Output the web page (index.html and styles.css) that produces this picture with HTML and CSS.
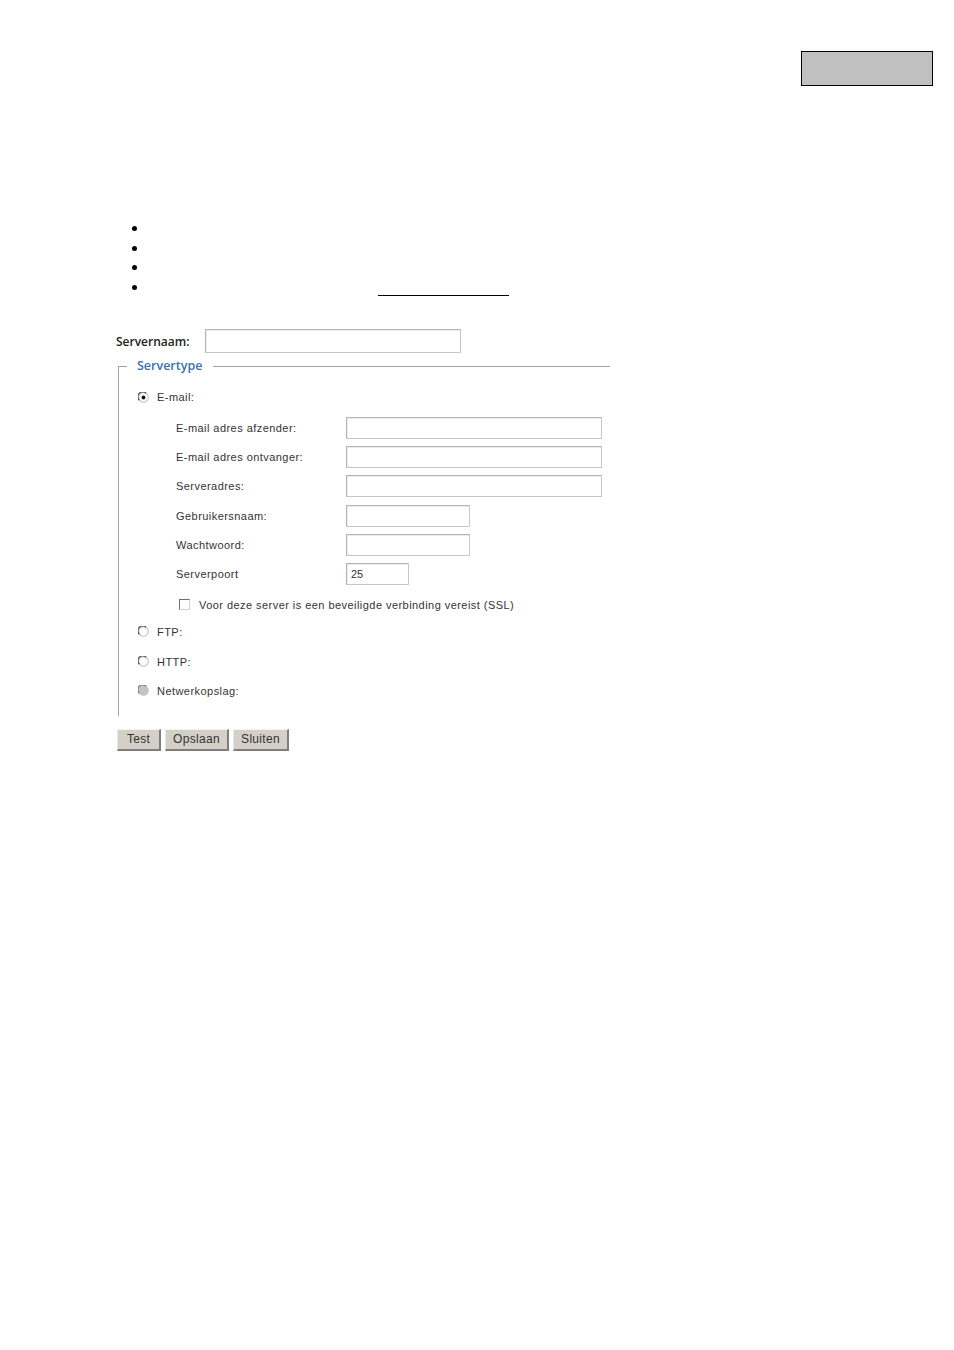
FILE: index.html
```html
<!DOCTYPE html>
<html>
<head>
<meta charset="utf-8">
<link rel="stylesheet" href="styles.css">
</head>
<body>
<div class="topbar"><div class="graybox"></div></div>

<ul class="bullets">
  <li></li>
  <li></li>
  <li></li>
  <li><span class="link-line"></span></li>
</ul>

<div class="form">
  <div class="name-row">
    <label class="name-label">Servernaam:</label>
    <div class="input input-name"></div>
  </div>

  <div class="fieldset">
    <div class="fs-head">
      <div class="fs-corner"></div>
      <div class="fs-legend">Servertype</div>
      <div class="fs-line"></div>
    </div>
    <div class="fs-body">
      <div class="radio-row">
        <svg class="radio" width="11" height="11" viewBox="0 0 11 11"><circle cx="5.5" cy="5.5" r="4.8" fill="#fff" stroke="#c4c4c4" stroke-width="1.1"/><path d="M1.3 8.2 A4.8 4.8 0 0 1 8.2 1.3" fill="none" stroke="#555" stroke-width="1.3"/><circle cx="5.5" cy="5.5" r="1.9" fill="#111"/></svg>
        <span class="txt">E-mail:</span>
      </div>

      <div class="email-grid">
        <span class="txt">E-mail adres afzender:</span><div class="input input-long"></div>
        <span class="txt">E-mail adres ontvanger:</span><div class="input input-long"></div>
        <span class="txt">Serveradres:</span><div class="input input-long"></div>
        <span class="txt">Gebruikersnaam:</span><div class="input input-mid"></div>
        <span class="txt">Wachtwoord:</span><div class="input input-mid"></div>
        <span class="txt">Serverpoort</span><div class="input input-short"><span class="val">25</span></div>
      </div>

      <div class="check-row">
        <span class="checkbox"></span>
        <span class="txt">Voor deze server is een beveiligde verbinding vereist (SSL)</span>
      </div>

      <div class="radio-row r-ftp">
        <svg class="radio" width="11" height="11" viewBox="0 0 11 11"><circle cx="5.5" cy="5.5" r="4.8" fill="#fff" stroke="#c4c4c4" stroke-width="1.1"/><path d="M1.3 8.2 A4.8 4.8 0 0 1 8.2 1.3" fill="none" stroke="#555" stroke-width="1.3"/></svg>
        <span class="txt">FTP:</span>
      </div>
      <div class="radio-row r-http">
        <svg class="radio" width="11" height="11" viewBox="0 0 11 11"><circle cx="5.5" cy="5.5" r="4.8" fill="#fff" stroke="#c4c4c4" stroke-width="1.1"/><path d="M1.3 8.2 A4.8 4.8 0 0 1 8.2 1.3" fill="none" stroke="#555" stroke-width="1.3"/></svg>
        <span class="txt">HTTP:</span>
      </div>
      <div class="radio-row r-nas">
        <svg class="radio" width="11" height="11" viewBox="0 0 11 11"><circle cx="5.5" cy="5.5" r="4.8" fill="#c4c4c4" stroke="#c4c4c4" stroke-width="1.1"/><path d="M1.3 8.2 A4.8 4.8 0 0 1 8.2 1.3" fill="none" stroke="#7a7a7a" stroke-width="1.3"/></svg>
        <span class="txt">Netwerkopslag:</span>
      </div>
    </div>
  </div>

  <div class="buttons">
    <button class="btn btn-test">Test</button>
    <button class="btn btn-save">Opslaan</button>
    <button class="btn btn-close">Sluiten</button>
  </div>
</div>
</body>
</html>
```
FILE: styles.css
```css
html, body {
  margin: 0;
  padding: 0;
  background: #fff;
}
body {
  width: 954px;
  font-family: "Liberation Sans", Arial, sans-serif;
  color: #333;
}

.topbar {
  display: flex;
  justify-content: flex-end;
  padding-top: 51px;
  padding-right: 21px;
}
.graybox {
  width: 130px;
  height: 33px;
  border: 1px solid #000;
  background: #c0c0c0;
}

.bullets {
  list-style: none;
  margin: 133px 0 0 0;
  padding: 0;
}
.bullets li {
  display: flex;
  align-items: center;
  height: 19.5px;
}
.bullets li::before {
  content: "";
  display: block;
  width: 5px;
  height: 5px;
  border-radius: 50%;
  background: #000;
  margin-left: 131.5px;
}
.link-line {
  align-self: flex-start;
  display: block;
  width: 131px;
  height: 17px;
  border-bottom: 1px solid #000;
  margin-left: 241.5px;
}

.form {
  margin-top: 32px;
}
.name-row {
  display: flex;
  align-items: center;
  padding-left: 116px;
}
.name-label {
  width: 89px;
  font-family: "Open Sans", "Liberation Sans", sans-serif;
  font-weight: 600;
  font-size: 12px;
  color: #222;
}
.input {
  box-sizing: border-box;
  height: 22px;
  border: 1px solid #c6c6c6;
  border-top-color: #b4b4b4;
  border-left-color: #b4b4b4;
  box-shadow: inset 1px 1px 0 #ececec;
  background: #fff;
}
.input-name {
  width: 256px;
  height: 24px;
}
.input-long { width: 256px; }
.input-mid { width: 124px; }
.input-short {
  width: 63px;
  display: flex;
  align-items: center;
  padding-left: 4px;
}
.val {
  font-size: 11px;
  color: #333;
}

.fieldset {
  margin-left: 118px;
  width: 492px;
  margin-top: 5px;
}
.fs-head {
  display: flex;
  align-items: center;
  height: 16px;
}
.fs-corner {
  align-self: flex-end;
  width: 8px;
  height: 8px;
  border-top: 1px solid #a2a2a2;
  border-left: 1px solid #a2a2a2;
  margin-bottom: -1px;
}
.fs-legend {
  padding: 0 11px 0 10px;
  font-family: "Open Sans", "Liberation Sans", sans-serif;
  font-weight: 600;
  font-size: 12.5px;
  color: #3a70b4;
  line-height: 16px;
}
.fs-line {
  flex: 1;
  height: 1px;
  background: #a2a2a2;
  margin-top: 1px;
}
.fs-body {
  border-left: 1px solid #a2a2a2;
  padding: 15px 0 17px 0;
}

.txt {
  font-size: 11px;
  letter-spacing: 0.45px;
  color: #333;
  white-space: nowrap;
}
.radio-row {
  display: flex;
  align-items: center;
  height: 16px;
  padding-left: 19px;
}
.radio {
  display: block;
  margin-right: 8px;
}
.email-grid {
  display: grid;
  grid-template-columns: 170px auto;
  grid-auto-rows: 22px;
  row-gap: 7.2px;
  align-items: center;
  justify-items: start;
  margin-top: 12px;
  padding-left: 57px;
}
.check-row {
  display: flex;
  align-items: center;
  height: 12px;
  margin-top: 14px;
  padding-left: 60px;
}
.checkbox {
  display: block;
  box-sizing: border-box;
  width: 11px;
  height: 11px;
  border: 1px solid;
  border-color: #6e6e6e #d0d0d0 #d0d0d0 #6e6e6e;
  background: #fff;
  margin-right: 9px;
}
.r-ftp { margin-top: 13px; }
.r-http { margin-top: 14px; }
.r-nas { margin-top: 13px; }

.buttons {
  display: flex;
  gap: 4px;
  margin-left: 117px;
  margin-top: 13px;
}
.btn {
  box-sizing: border-box;
  height: 22px;
  padding: 0;
  font-family: "Liberation Sans", Arial, sans-serif;
  font-size: 12px;
  letter-spacing: 0.3px;
  color: #333;
  background: #d4d0c8;
  border-style: solid;
  border-width: 1px 2px 2px 1px;
  border-color: #f4f4f4 #7e7e7e #7e7e7e #e8e8e8;
}
.btn-test { width: 44px; }
.btn-save { width: 64px; }
.btn-close { width: 56px; }
```
